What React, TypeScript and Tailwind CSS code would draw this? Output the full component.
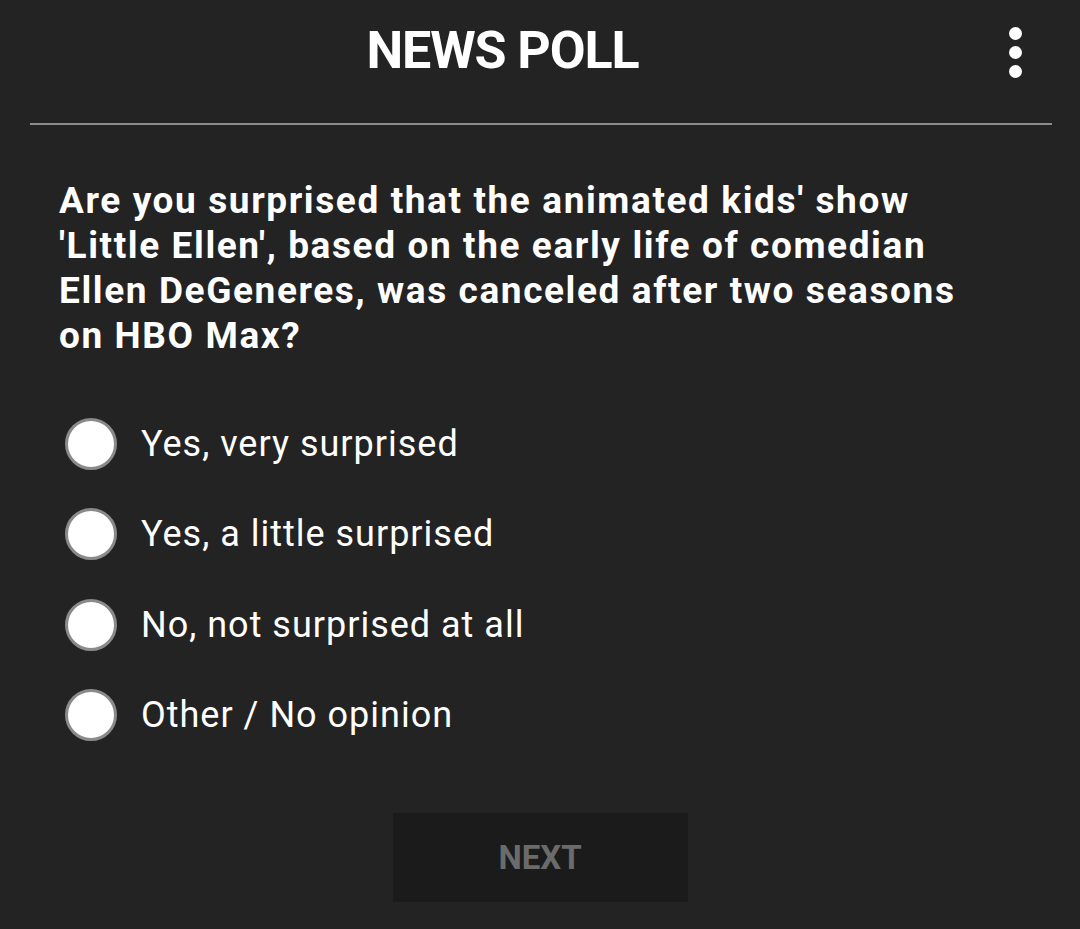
import React, { useState } from 'react';

const OPTIONS = [
  'Yes, very surprised',
  'Yes, a little surprised',
  'No, not surprised at all',
  'Other / No opinion',
];

export default function App() {
  const [choice, setChoice] = useState<number | null>(null);

  return (
    <div className="min-h-[929px] w-[1080px] bg-[#232323] text-white font-['Roboto',sans-serif] overflow-hidden">
      {/* Header */}
      <div className="relative h-[123px] px-[30px]">
        <h1 className="pt-[20px] pr-[75px] text-center text-[52px] leading-[61px] font-bold tracking-[-1.1px]">
          NEWS POLL
        </h1>
        <button className="absolute right-[58px] top-[27px] flex flex-col gap-[6px]">
          <span className="block w-[13px] h-[13px] rounded-full bg-white" />
          <span className="block w-[13px] h-[13px] rounded-full bg-white" />
          <span className="block w-[13px] h-[13px] rounded-full bg-white" />
        </button>
      </div>
      <div className="ml-[30px] mr-[28px] h-[2px] bg-[#8c8c8c]" />

      {/* Question */}
      <div className="px-[59px] pt-[53px]">
        <p className="max-w-[920px] text-[37px] leading-[45px] font-bold tracking-[1.6px]">
          Are you surprised that the animated kids' show 'Little Ellen', based on the early life of comedian
          Ellen DeGeneres, was canceled after two seasons on HBO Max?
        </p>

        <div className="mt-[41px] flex flex-col">
          {OPTIONS.map((opt, i) => (
            <label
              key={opt}
              className="flex h-[90.3px] items-center gap-[24px] pl-[6px] cursor-pointer"
              onClick={() => setChoice(i)}
            >
              <span className="flex items-center justify-center w-[52px] h-[52px] rounded-full bg-white border-[3px] border-[#8a8a8a]">
                {choice === i && <span className="w-[26px] h-[26px] rounded-full bg-[#232323]" />}
              </span>
              <span className="text-[36px] leading-[42px] tracking-[1px]">{opt}</span>
            </label>
          ))}
        </div>
      </div>

      {/* Next */}
      <div className="flex justify-center pt-[53px]">
        <button
          className="w-[295px] h-[89px] bg-[#1b1b1b] text-[33px] font-bold text-[#6b6b6b]"
          disabled={choice === null}
        >
          NEXT
        </button>
      </div>
    </div>
  );
}
